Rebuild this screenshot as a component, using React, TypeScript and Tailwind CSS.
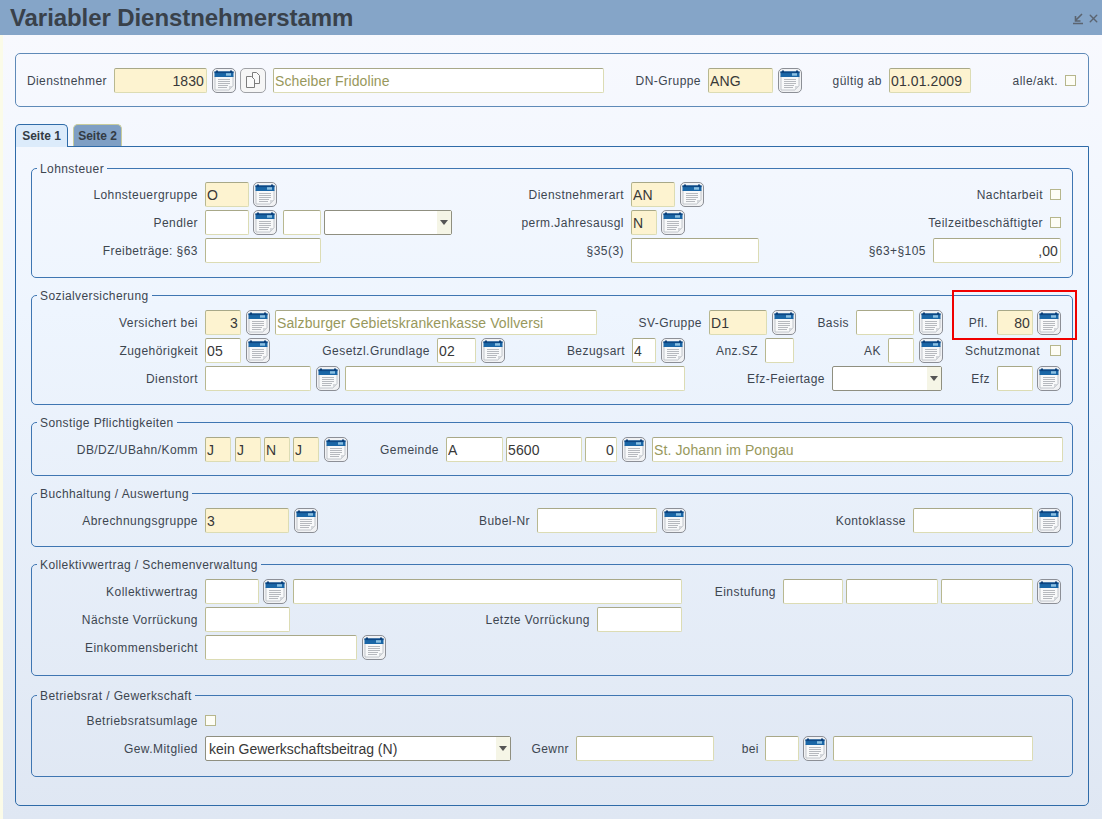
import type { ReactNode } from "react";
import { X } from "lucide-react";

const Lbl = ({ c, children }: { c: string; children: ReactNode }) => (
  <span className={`${c} shrink-0 pt-[1px] text-right whitespace-nowrap text-[12px] tracking-[0.45px] text-[#3d4650]`}>
    {children}
  </span>
);

// default is the white field, y = the yellow mandatory one
const Inp = ({
  c,
  v = "",
  y,
  right,
  hint,
}: {
  c: string;
  v?: string;
  y?: boolean;
  right?: boolean;
  hint?: boolean;
}) => (
  <input
    readOnly
    value={v}
    className={`${c} ${y ? "bg-[#fdf3d0]" : "bg-white"} ${right ? "text-right" : "text-left"} ${
      hint ? "text-[#98985c]" : "text-[#383838]"
    } h-[25px] shrink-0 rounded-[2px] border border-[#dcdcb4] border-t-[#a8a888] border-l-[#b8b890] pl-[1px] pr-[2px] pt-[1px] text-[14px] tracking-[0.1px] outline-none`}
  />
);

const Sel = ({ c, v = "" }: { c: string; v?: string }) => (
  <div className={`${c} flex h-[25px] shrink-0 items-center rounded-[2px] border border-[#8f8f80] bg-white text-[14px] text-[#383838]`}>
    <span className="flex-1 truncate pl-[3px] pt-[1px]">{v}</span>
    <span className="flex h-full w-[14px] items-center justify-center bg-[#f5f5e6]">
      <span className="h-0 w-0 border-x-[4px] border-t-[5px] border-x-transparent border-t-[#555]" />
    </span>
  </div>
);

const Chk = ({ c }: { c: string }) => (
  <span className={`${c} h-[11px] w-[11px] shrink-0 border border-[#b6b68c] bg-[#fdfdf6]`} />
);

const Cal = ({ c }: { c: string }) => (
  <button className={`${c} flex h-[25px] w-[24px] shrink-0 items-center justify-center rounded-[5px] border border-[#8c8f96] bg-[#f1f2f4]`}>
    <svg width="20" height="21" viewBox="0 0 20 21">
      <path d="M1 6h18v10l-4 4H1z" fill="#f8f9fa" stroke="#aeb2b8" strokeWidth="0.7" />
      <path d="M15 20v-4h4z" fill="#d4d7db" />
      <rect x="0.5" y="1.5" width="19" height="5.5" fill="#1a66a6" />
      <rect x="0.5" y="1.5" width="19" height="1.6" fill="#0d4784" />
      <rect x="2" y="0.5" width="2" height="2" fill="#0c3f78" />
      <rect x="16" y="0.5" width="2" height="2" fill="#0c3f78" />
      <rect x="12" y="3.2" width="5" height="2.5" fill="#8cc0e2" />
      <path d="M4 9.5h12M4 11.5h12M4 13.5h12M4 15.5h10M4 17.5h9" stroke="#a4a8ae" strokeWidth="0.8" />
    </svg>
  </button>
);

const Copy = ({ c }: { c: string }) => (
  <button className={`${c} flex h-[25px] w-[26px] shrink-0 items-center justify-center rounded-[5px] border border-[#a0a2a6] bg-[#f6f6f6]`}>
    <svg width="18" height="18" viewBox="0 0 18 18" fill="#fafafa" stroke="#7c7c7c" strokeWidth="1">
      <path d="M8.5 1.5h4l3 3v8h-7z" />
      <path d="M2.5 5.5h5l3 3v8h-8z" />
    </svg>
  </button>
);

const Row = ({ children }: { children: ReactNode }) => (
  <div className="flex h-[25px] items-center">{children}</div>
);

const Group = ({
  title,
  pt,
  pb,
  mt = "",
  children,
}: {
  title: string;
  pt: string;
  pb: string;
  mt?: string;
  children: ReactNode;
}) => (
  <fieldset className={`${pt} ${pb} ${mt} flex flex-col gap-[3px] rounded-[5px] border border-[#3f76b2]`}>
    <legend className="ml-[5px] translate-y-[1px] px-[3px] text-[12px] leading-[16px] tracking-[0.4px] text-[#3d4650]">{title}</legend>
    {children}
  </fieldset>
);

export default function App() {
  return (
    <div className="h-[819px] w-[1102px] overflow-hidden bg-[#f8f9fe] font-['Liberation_Sans',sans-serif]">
      <header className="flex h-[35px] items-center justify-between bg-[#85a5c8] pl-[10px] pr-[2px]">
        <h1 className="text-[24px] font-bold leading-none tracking-[-0.08px] text-[#39414a]">Variabler Dienstnehmerstamm</h1>
        <div className="mt-[1px] flex items-center text-[#5b6470]">
          <svg width="13" height="13" viewBox="0 0 13 13" fill="none" stroke="currentColor" strokeWidth="1.6">
            <path d="M1 11.5h10M10 2L4 8M3.5 4v5h5" />
          </svg>
          <X size={13} strokeWidth={2.6} className="ml-[2px]" />
        </div>
      </header>

      <main className="h-[784px] border-l-[3px] border-[#fbfbe8] bg-gradient-to-b from-[#f8f9fe] via-[#eef5fe] via-35% to-[#dfe7f3] pl-[12px] pr-[13px] pt-[18px]">
        <section className="flex h-[54px] items-center rounded-[5px] border border-[#5f8ab8]">
          <Lbl c="w-[91px]">Dienstnehmer</Lbl>
          <Inp c="ml-[7px] w-[93px]" v="1830" y right />
          <Cal c="ml-[5px]" />
          <Copy c="ml-[4px]" />
          <Inp c="ml-[7px] w-[331px]" v="Scheiber Fridoline" hint />
          <Lbl c="w-[97px]">DN-Gruppe</Lbl>
          <Inp c="ml-[7px] w-[65px]" v="ANG" y />
          <Cal c="ml-[5px]" />
          <Lbl c="w-[80px]">gültig ab</Lbl>
          <Inp c="ml-[7px] w-[82px]" v="01.01.2009" y />
          <Lbl c="w-[87px]">alle/akt.</Lbl>
          <Chk c="ml-[7px]" />
        </section>

        <div className="mt-[17px] flex h-[22px] items-stretch">
          <div className="relative z-10 -mb-px flex w-[53px] items-center justify-center rounded-t-[5px] border border-b-0 border-[#2f6ba8] bg-[#dcebfb] text-[12px] font-bold text-[#333b44]">
            Seite 1
          </div>
          <div className="ml-[5px] flex w-[49px] items-center justify-center rounded-t-[5px] border border-b-0 border-[#c8cc9c] bg-[#7f9fc4] text-[12px] font-bold text-[#333b44]">
            Seite 2
          </div>
        </div>

        <div className="flex h-[660px] flex-col gap-[9px] rounded-b-[5px] border border-[#2f6ba8] px-[15px] pt-[13px]">
          <Group title="Lohnsteuer" pt="pt-[6px]" pb="pb-[14px]">
            <Row>
              <Lbl c="w-[166px]">Lohnsteuergruppe</Lbl>
              <Inp c="ml-[7px] w-[44px]" v="O" y />
              <Cal c="ml-[4px]" />
              <Lbl c="w-[347px]">Dienstnehmerart</Lbl>
              <Inp c="ml-[7px] w-[44px]" v="AN" y />
              <Cal c="ml-[5px]" />
              <Lbl c="w-[339px]">Nachtarbeit</Lbl>
              <Chk c="ml-[7px]" />
            </Row>
            <Row>
              <Lbl c="w-[166px]">Pendler</Lbl>
              <Inp c="ml-[7px] w-[44px]" />
              <Cal c="ml-[4px]" />
              <Inp c="ml-[6px] w-[38px]" />
              <Sel c="ml-[3px] w-[128px]" />
              <Lbl c="w-[172px]">perm.Jahresausgl</Lbl>
              <Inp c="ml-[7px] w-[26px]" v="N" y />
              <Cal c="ml-[4px]" />
              <Lbl c="w-[358px]">Teilzeitbeschäftigter</Lbl>
              <Chk c="ml-[7px]" />
            </Row>
            <Row>
              <Lbl c="w-[166px]">Freibeträge: §63</Lbl>
              <Inp c="ml-[7px] w-[116px]" />
              <Lbl c="w-[303px]">§35(3)</Lbl>
              <Inp c="ml-[7px] w-[128px]" />
              <Lbl c="w-[167px]">§63+§105</Lbl>
              <Inp c="ml-[7px] w-[128px]" v=",00" right />
            </Row>
          </Group>

          <Group title="Sozialversicherung" pt="pt-[7px]" pb="pb-[13px]">
            <Row>
              <Lbl c="w-[166px]">Versichert bei</Lbl>
              <Inp c="ml-[7px] w-[36px]" v="3" y right />
              <Cal c="ml-[5px]" />
              <Inp c="ml-[5px] w-[322px]" v="Salzburger Gebietskrankenkasse Vollversi" hint />
              <Lbl c="w-[105px]">SV-Gruppe</Lbl>
              <Inp c="ml-[7px] w-[58px]" v="D1" y />
              <Cal c="ml-[5px]" />
              <Lbl c="w-[53px]">Basis</Lbl>
              <Inp c="ml-[7px] w-[58px]" />
              <Cal c="ml-[5px]" />
              <Lbl c="w-[45px]">Pfl.</Lbl>
              <Inp c="ml-[9px] w-[36px]" v="80" y right />
              <Cal c="ml-[4px]" />
            </Row>
            <Row>
              <Lbl c="w-[166px]">Zugehörigkeit</Lbl>
              <Inp c="ml-[7px] w-[36px]" v="05" />
              <Cal c="ml-[5px]" />
              <Lbl c="w-[160px]">Gesetzl.Grundlage</Lbl>
              <Inp c="ml-[7px] w-[39px]" v="02" />
              <Cal c="ml-[5px]" />
              <Lbl c="w-[120px]">Bezugsart</Lbl>
              <Inp c="ml-[7px] w-[24px]" v="4" />
              <Cal c="ml-[5px]" />
              <Lbl c="w-[73px]">Anz.SZ</Lbl>
              <Inp c="ml-[7px] w-[29px]" />
              <Lbl c="w-[87px]">AK</Lbl>
              <Inp c="ml-[7px] w-[26px]" />
              <Cal c="ml-[5px]" />
              <Lbl c="w-[97px]">Schutzmonat</Lbl>
              <Chk c="ml-[10px]" />
            </Row>
            <Row>
              <Lbl c="w-[166px]">Dienstort</Lbl>
              <Inp c="ml-[7px] w-[106px]" />
              <Cal c="ml-[5px]" />
              <Inp c="ml-[5px] w-[340px]" />
              <Lbl c="w-[140px]">Efz-Feiertage</Lbl>
              <Sel c="ml-[7px] w-[110px]" />
              <Lbl c="w-[48px]">Efz</Lbl>
              <Inp c="ml-[7px] w-[36px]" />
              <Cal c="ml-[4px]" />
            </Row>
          </Group>

          <Group title="Sonstige Pflichtigkeiten" pt="pt-[7px]" pb="pb-[13px]">
            <Row>
              <Lbl c="w-[166px]">DB/DZ/UBahn/Komm</Lbl>
              <Inp c="ml-[7px] w-[26px]" v="J" y />
              <Inp c="ml-[4px] w-[26px]" v="J" y />
              <Inp c="ml-[3px] w-[26px]" v="N" y />
              <Inp c="ml-[3px] w-[26px]" v="J" y />
              <Cal c="ml-[5px]" />
              <Lbl c="w-[91px]">Gemeinde</Lbl>
              <Inp c="ml-[7px] w-[57px]" v="A" />
              <Inp c="ml-[3px] w-[76px]" v="5600" />
              <Inp c="ml-[3px] w-[32px]" v="0" right />
              <Cal c="ml-[5px]" />
              <Inp c="ml-[6px] w-[411px]" v="St. Johann im Pongau" hint />
            </Row>
          </Group>

          <Group title="Buchhaltung / Auswertung" pt="pt-[7px]" pb="pb-[13px]">
            <Row>
              <Lbl c="w-[166px]">Abrechnungsgruppe</Lbl>
              <Inp c="ml-[7px] w-[84px]" v="3" y />
              <Cal c="ml-[5px]" />
              <Lbl c="w-[212px]">Bubel-Nr</Lbl>
              <Inp c="ml-[7px] w-[120px]" />
              <Cal c="ml-[5px]" />
              <Lbl c="w-[220px]">Kontoklasse</Lbl>
              <Inp c="ml-[7px] w-[120px]" />
              <Cal c="ml-[4px]" />
            </Row>
          </Group>

          <Group title="Kollektivwertrag / Schemenverwaltung" pt="pt-[7px]" pb="pb-[15px]">
            <Row>
              <Lbl c="w-[166px]">Kollektivwertrag</Lbl>
              <Inp c="ml-[7px] w-[54px]" />
              <Cal c="ml-[4px]" />
              <Inp c="ml-[6px] w-[389px]" />
              <Lbl c="w-[94px]">Einstufung</Lbl>
              <Inp c="ml-[7px] w-[60px]" />
              <Inp c="ml-[3px] w-[92px]" />
              <Inp c="ml-[3px] w-[92px]" />
              <Cal c="ml-[4px]" />
            </Row>
            <Row>
              <Lbl c="w-[166px]">Nächste Vorrückung</Lbl>
              <Inp c="ml-[7px] w-[85px]" />
              <Lbl c="w-[300px]">Letzte Vorrückung</Lbl>
              <Inp c="ml-[7px] w-[85px]" />
            </Row>
            <Row>
              <Lbl c="w-[166px]">Einkommensbericht</Lbl>
              <Inp c="ml-[7px] w-[152px]" />
              <Cal c="ml-[5px]" />
            </Row>
          </Group>

          <Group title="Betriebsrat / Gewerkschaft" pt="pt-[5px]" pb="pb-[15px]" mt="mt-[2px]">
            <Row>
              <Lbl c="w-[166px]">Betriebsratsumlage</Lbl>
              <Chk c="ml-[7px]" />
            </Row>
            <Row>
              <Lbl c="w-[166px]">Gew.Mitglied</Lbl>
              <Sel c="ml-[7px] w-[306px]" v="kein Gewerkschaftsbeitrag (N)" />
              <Lbl c="w-[58px]">Gewnr</Lbl>
              <Inp c="ml-[7px] w-[138px]" />
              <Lbl c="w-[45px]">bei</Lbl>
              <Inp c="ml-[6px] w-[34px]" />
              <Cal c="ml-[4px]" />
              <Inp c="ml-[6px] w-[200px]" />
            </Row>
          </Group>
        </div>
      </main>

      {/* red note frame from the original screenshot */}
      <div className="absolute left-[952px] top-[290px] h-[50px] w-[125px] border-2 border-[#f00000]" />
    </div>
  );
}
